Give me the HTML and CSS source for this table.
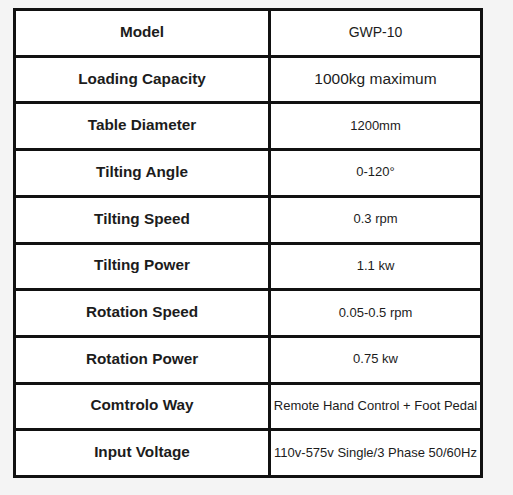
FILE: index.html
```html
<!DOCTYPE html>
<html>
<head>
<meta charset="utf-8">
<link rel="stylesheet" href="styles.css">
</head>
<body>
<div class="spec">
  <div class="cell key">Model</div><div class="cell val v14">GWP-10</div>
  <div class="cell key">Loading Capacity</div><div class="cell val v15">1000kg maximum</div>
  <div class="cell key">Table Diameter</div><div class="cell val">1200mm</div>
  <div class="cell key">Tilting Angle</div><div class="cell val">0-120°</div>
  <div class="cell key">Tilting Speed</div><div class="cell val">0.3 rpm</div>
  <div class="cell key">Tilting Power</div><div class="cell val">1.1 kw</div>
  <div class="cell key">Rotation Speed</div><div class="cell val">0.05-0.5 rpm</div>
  <div class="cell key">Rotation Power</div><div class="cell val">0.75 kw</div>
  <div class="cell key">Comtrolo Way</div><div class="cell val">Remote Hand Control + Foot Pedal</div>
  <div class="cell key">Input Voltage</div><div class="cell val">110v-575v Single/3 Phase 50/60Hz</div>
</div>
</body>
</html>
```
FILE: styles.css
```css
html, body {
  margin: 0;
  padding: 0;
  background: #f4f4f4;
}
body {
  padding: 8px 0 0 13px;
  font-family: "Liberation Sans", Arial, sans-serif;
  color: #1c1c1c;
}
.spec {
  box-sizing: border-box;
  width: 470px;
  height: 470px;
  background: #111;
  padding: 3px;
  display: grid;
  grid-template-columns: 252px 209px;
  grid-template-rows: repeat(10, 1fr);
  gap: 3px;
}
.cell {
  box-sizing: border-box;
  background: #fff;
  display: flex;
  align-items: center;
  justify-content: center;
  text-align: center;
  white-space: nowrap;
  overflow: hidden;
  padding-bottom: 2px;
}
.key {
  font-weight: bold;
  font-size: 15.3px;
}
.val {
  font-size: 13px;
}
.val.v14 {
  font-size: 14px;
}
.val.v15 {
  font-size: 15.5px;
}
```
